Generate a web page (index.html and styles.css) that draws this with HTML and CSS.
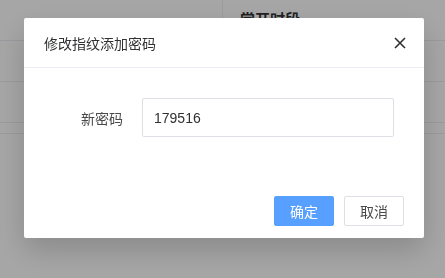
FILE: index.html
```html
<!DOCTYPE html>
<html lang="zh">
<head>
<meta charset="utf-8">
<link rel="stylesheet" href="styles.css">
</head>
<body>
<div class="page">
  <div class="table">
    <div class="row head">
      <div class="cell c1"></div>
      <div class="cell c2">常开时段</div>
    </div>
    <div class="row"><div class="cell c1"></div><div class="cell c2"></div></div>
    <div class="row"><div class="cell c1"></div><div class="cell c2"></div></div>
    <div class="row thin"><div class="cell c1"></div><div class="cell c2"></div></div>
  </div>
</div>
<div class="mask">
  <div class="dialog">
    <div class="dialog-header">
      <span class="title">修改指纹添加密码</span>
      <svg class="close" width="12" height="12" viewBox="0 0 12 12"><path d="M1 1L11 11M11 1L1 11" stroke="#303133" stroke-width="1.6" fill="none"/></svg>
    </div>
    <div class="dialog-body">
      <div class="form-item">
        <label class="label">新密码</label>
        <div class="input">179516</div>
      </div>
    </div>
    <div class="dialog-footer">
      <button class="btn primary">确定</button>
      <button class="btn">取消</button>
    </div>
  </div>
</div>
</body>
</html>
```
FILE: styles.css
```css
* { box-sizing: border-box; }
html, body { margin: 0; padding: 0; }
body {
  width: 445px; height: 278px; overflow: hidden;
  background: #fff;
  font-family: "Liberation Sans", "Noto Sans CJK SC", sans-serif;
}
.page { width: 445px; height: 278px; }
.table { display: flex; flex-direction: column; }
.row { display: flex; height: 41px; border-bottom: 1px solid #ebeef5; }
.row.head { height: 41px; }
.row.thin { height: 11px; }
.cell { height: 100%; }
.c1 { width: 223px; border-right: 1px solid #ebeef5; }
.c2 { flex: 1; padding: 8px 0 0 17px; font-size: 15px; font-weight: bold; color: #333; }
.mask {
  position: fixed; inset: 0;
  background: rgba(0,0,0,0.35);
}
.dialog {
  position: absolute; left: 24px; top: 18px;
  width: 400px; height: 220px;
  background: #fff; border-radius: 2px;
  box-shadow: 0 12px 30px rgba(0,0,0,0.18);
  display: flex; flex-direction: column;
}
.dialog-header {
  height: 50px; border-bottom: 1px solid #ebeef5;
  display: flex; align-items: center; justify-content: space-between;
  padding: 0 18px 0 20px;
}
.title { font-size: 14px; color: #303133; font-family: "Noto Sans CJK SC", sans-serif; }
.close { display: block; }
.dialog-body { padding: 30px 30px 0 0; height: 118px; }
.form-item { display: flex; align-items: center; }
.label { width: 118px; flex: none; text-align: right; padding-right: 19px; font-size: 14px; color: #4a4a4a; font-family: "Noto Sans CJK SC", sans-serif; }
.input {
  width: 252px; height: 39px; border: 1px solid #dcdfe6; border-radius: 2px;
  padding-left: 11px; display: flex; align-items: center;
  font-size: 14px; color: #303133;
}
.dialog-footer { display: flex; justify-content: flex-end; gap: 10px; padding: 10px 20px 0 0; }
.btn {
  width: 60px; height: 30px; border: 1px solid #dcdfe6; border-radius: 2px;
  background: #fff; color: #4a4a4a; font-size: 14px; padding: 0;
  font-family: "Noto Sans CJK SC", sans-serif;
}
.btn.primary { background: #58a0ff; border-color: #58a0ff; color: #fff; }
```
